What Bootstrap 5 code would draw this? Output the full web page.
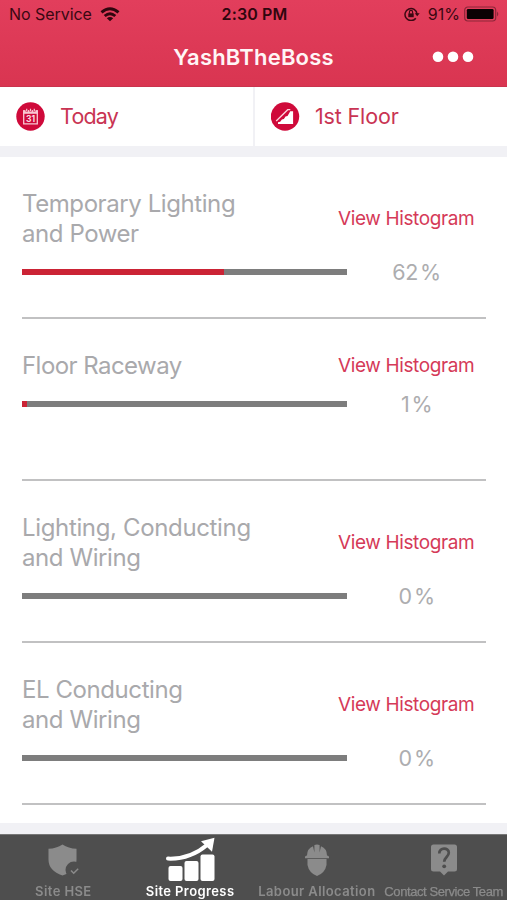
<!DOCTYPE html>
<html lang="en">
<head>
<meta charset="utf-8">
<meta name="viewport" content="width=device-width, initial-scale=1">
<title>Site Progress</title>
<link rel="stylesheet" href="https://cdn.jsdelivr.net/npm/bootstrap@5.3.0/dist/css/bootstrap.min.css">
<style>
body{font-family:Inter,"Liberation Sans",sans-serif;background:#fff;color:#a3a3a6;height:900px;overflow:hidden;white-space:nowrap}
.top-area{height:87px;background:linear-gradient(#e23e5c,#d93551);border-bottom:1px solid #c9344e}
.status{height:28px;padding:0 7px 0 9px;color:#3a0812;font-size:16px;display:grid;grid-template-columns:1fr auto 1fr}
.status .carrier{letter-spacing:-.05px}
.status .clock{font-weight:600;letter-spacing:.15px;color:#30060e}
.title-row{height:58px;display:grid;grid-template-columns:1fr auto 1fr}
.title-row h1{font-size:22px;font-weight:600;letter-spacing:.2px;color:#fff5f6}
.dots{margin-right:33px}
.filters{height:59px}
.filter{color:#c93453;font-size:21.5px;letter-spacing:-.15px;padding-left:16px;gap:15px;width:253px}
.filter + .filter{border-left:2px solid #f1f1f5;width:254px}
.tight{letter-spacing:-.8px}
.band{background:#f1f1f5;height:11px}
.task{height:162px;margin:0 21px 0 22px;padding-top:32px;border-bottom:2px solid #c1c1c2}
.task-title{font-size:24px;line-height:30px;font-weight:400;color:#a9a9ac;letter-spacing:-.55px}
.task-title .wide{letter-spacing:-.35px}
.task-title .loose{letter-spacing:-.42px}
.hist{width:136px;margin-right:12px;font-size:19px;color:#d53a58;text-decoration:none;letter-spacing:-.38px}
.meter{height:46px}
.track{width:325px;height:6px;border-radius:0;background:#7d7d7d}
.track .progress-bar{background:#cb2335}
.pct{width:139px;font-size:21.5px;font-weight:400;color:#adadaf;letter-spacing:-.5px;word-spacing:-3.2px}
.tabs{height:66px;background:#4e4e4e;border-top:1px solid #777}
.tab{width:25%;color:#8b8b8b;font-size:13px;font-weight:600;text-decoration:none}
.tab svg{height:46px;flex:none}
.tab span{line-height:21px}
.t1{letter-spacing:.4px}
.t2{letter-spacing:.4px}
.t3{letter-spacing:.4px}
.t4{font-family:"Liberation Sans",sans-serif;font-weight:400;letter-spacing:-.42px;-webkit-text-stroke:.25px #8b8b8b}
.tab.current{color:#fff}
</style>
<script src="https://cdn.jsdelivr.net/npm/bootstrap@5.3.0/dist/js/bootstrap.bundle.min.js"></script>
</head>
<body>
<header class="top-area">
  <div class="status align-items-center">
    <div class="d-flex align-items-center gap-2"><span class="carrier">No Service</span>
      <svg width="20" height="15" viewBox="0 0 20 15" fill="none" stroke="#30060e" stroke-width="2.9"><path d="M1.5 5.4Q10-2 18.5 5.4M4.7 9Q10 4.4 15.3 9"/><path d="M10 14.3 6.8 11.3Q10 8.7 13.2 11.3Z" fill="#30060e" stroke="none"/></svg>
    </div>
    <span class="clock">2:30 PM</span>
    <div class="d-flex align-items-center justify-content-end">
      <svg class="me-2" width="16" height="14" viewBox="0 0 16 14" fill="none" stroke="#3a0812" stroke-width="1.5"><path d="M11.8 11.2A6 6 0 1 1 13 7"/><path d="M10.7 6.3h5L13.2 9.3Z" fill="#3a0812" stroke="none"/><path d="M4.3 6.4h5.4v3.8H4.3Z" fill="#3a0812" stroke="none"/><path d="M5.4 6.8V5a1.6 1.6 0 0 1 3.2 0v1.8" stroke-width="1.1"/></svg>
      <span class="batt">91%</span>
      <svg class="ms-1" width="36" height="16" viewBox="0 0 36 16"><rect x=".7" y="1" width="31" height="14" rx="3.2" fill="none" stroke="#8d2639" stroke-width="1.2"/><rect x="2.8" y="3" width="26.8" height="10" rx="1.3" fill="#0b0103"/><path d="M33 5.5q2.6 2.5 0 5Z" fill="#8d2639"/></svg>
    </div>
  </div>
  <div class="title-row align-items-center">
    <i></i><h1 class="m-0">YashBTheBoss</h1>
    <svg class="dots ms-auto" width="42" height="12" viewBox="0 0 42 12" fill="#fff"><circle cx="6" cy="5.700" r="5.300"/><circle cx="21" cy="5.700" r="5.300"/><circle cx="36" cy="5.700" r="5.300"/></svg>
  </div>
</header>
<div class="filters d-flex">
  <div class="filter d-flex align-items-center">
    <svg width="29" height="29" viewBox="0 0 29 29"><circle cx="14.5" cy="14.500" r="14.200" fill="#cf0a3a"/><path d="M7.700 9h13.600v12.800H7.700Z" fill="none" stroke="#f8c7d2" stroke-width="1.300"/><path d="M7.100 8.300h14.800v3.500H7.100Z" fill="#f8c7d2"/><path d="M10.700 7v2.600M14.500 7v2.600M18.300 7v2.600" stroke="#cf0a3a" stroke-width="2.400"/><path d="M10.700 6.700v2.300M14.500 6.700v2.300M18.300 6.700v2.300" stroke="#f8c7d2" stroke-width="1.200"/><text x="14.700" y="20.400" text-anchor="middle" font-size="8.500" font-weight="700" letter-spacing="0" fill="#fbd9e0">31</text></svg>
    <span class="tight">Today</span>
  </div>
  <div class="filter d-flex align-items-center">
    <svg width="29" height="29" viewBox="0 0 29 29"><circle cx="14" cy="14.500" r="14.200" fill="#cf0a3a"/><path d="M7 22v-1.800l2.200-.4 1.700-2.300 2-.5 1.600-2.400 2-.7 1.500-2.400 1.200-2.200h2.900V22Z" fill="#fff"/><path d="m5.200 19 11.500-11.300h2.600" fill="none" stroke="#fbd3dc" stroke-width="1.300"/></svg>
    <span>1st Floor</span>
  </div>
</div>
<div class="band"></div>
<main>
  <section class="task">
    <div class="d-flex justify-content-between align-items-center"><div class="task-title"><span class="loose">Temporary Lighting</span><br><span class="loose">and Power</span></div><a class="hist" href="#">View Histogram</a></div>
    <div class="meter d-flex align-items-center"><div class="progress track"><div class="progress-bar" style="width:62%"></div></div><div class="pct text-center">62 %</div></div>
  </section>
  <section class="task">
    <div class="d-flex justify-content-between align-items-center"><div class="task-title"><span>Floor Raceway</span></div><a class="hist" href="#">View Histogram</a></div>
    <div class="meter d-flex align-items-center"><div class="progress track"><div class="progress-bar" style="width:1.6%"></div></div><div class="pct text-center">1 %</div></div>
  </section>
  <section class="task">
    <div class="d-flex justify-content-between align-items-center"><div class="task-title"><span class="wide">Lighting, Conducting</span><br><span class="loose">and Wiring</span></div><a class="hist" href="#">View Histogram</a></div>
    <div class="meter d-flex align-items-center"><div class="progress track"></div><div class="pct text-center">0 %</div></div>
  </section>
  <section class="task">
    <div class="d-flex justify-content-between align-items-center"><div class="task-title"><span class="loose">EL Conducting</span><br><span class="loose">and Wiring</span></div><a class="hist" href="#">View Histogram</a></div>
    <div class="meter d-flex align-items-center"><div class="progress track"></div><div class="pct text-center">0 %</div></div>
  </section>
</main>
<footer class="fixed-bottom">
  <div class="band"></div>
  <nav class="tabs d-flex">
    <a class="tab d-flex flex-column align-items-center" href="#"><svg width="34" height="46" viewBox="0 0 34 46"><path d="M16.500 9.500q6 4 14 4.300v11q0 11-14 15.700-14-4.700-14-15.700v-11q8-.3 14-4.300Z" fill="#8b8b8b"/><circle cx="28" cy="35" r="8.500" fill="#4e4e4e"/><path d="m25 35.500 2.700 2.700 4.500-4.500" fill="none" stroke="#8b8b8b" stroke-width="1.500"/></svg><span class="t1">Site HSE</span></a>
    <a class="tab current d-flex flex-column align-items-center" href="#"><svg width="50" height="46" viewBox="0 0 50 46" fill="#fff"><rect x="3.500" y="31" width="14" height="15" rx="2"/><rect x="19.500" y="26" width="14" height="20" rx="2"/><rect x="35.500" y="19.500" width="14" height="26.500" rx="2"/><path d="M3 23.600Q25 24.500 42 10" fill="none" stroke="#fff" stroke-width="4" stroke-linecap="round"/><path d="m36 6.200 13.500-3.400-2.500 14Z"/></svg><span class="t2">Site Progress</span></a>
    <a class="tab d-flex flex-column align-items-center" href="#"><svg width="26" height="46" viewBox="0 0 26 46" fill="#8b8b8b"><path d="M1 22q0-1.500 2-1.500 0-7 6-9.300l1.400 6.300V10q2.600-1.200 5.200 0v7.500l1.400-6.300q6 2.300 6 9.300 2 0 2 1.500v1.300H1Z"/><path d="M3.500 24h19v6Q21 38 13 41 5 38 3.500 30Z"/></svg><span class="t3">Labour Allocation</span></a>
    <a class="tab d-flex flex-column align-items-center" href="#"><svg width="28" height="46" viewBox="0 0 28 46"><path d="M3.500 9.500h21a2.500 2.500 0 0 1 2.500 2.500v22a2.500 2.500 0 0 1-2.500 2.500H18l-4 4-4-4H3.500A2.500 2.500 0 0 1 1 34V12a2.500 2.500 0 0 1 2.500-2.500Z" fill="#8b8b8b"/><path d="M9.300 18.500c0-6.500 9.500-6.200 9.500-.7 0 4-4.600 4.400-4.600 9" fill="none" stroke="#4e4e4e" stroke-width="2.700"/><circle cx="14.200" cy="31.300" r="1.900" fill="#4e4e4e"/></svg><span class="t4">Contact Service Team</span></a>
  </nav>
</footer>
</body>
</html>
